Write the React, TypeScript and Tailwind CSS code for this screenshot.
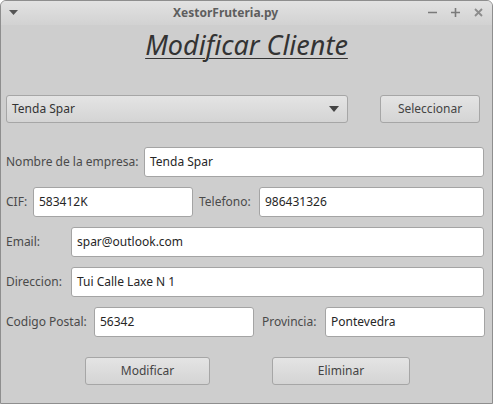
import React from "react";

function Field({ value, className = "" }: { value: string; className?: string }) {
  return (
    <div
      className={`flex h-[30px] items-center rounded-[3px] border border-[#a4a4a4] bg-white pl-[5px] text-[12px] text-[#262626] ${className}`}
    >
      {value}
    </div>
  );
}

function Label({ children, className = "" }: { children: React.ReactNode; className?: string }) {
  return <span className={`shrink-0 text-[12px] text-[#4a4a4a] ${className}`}>{children}</span>;
}

function Button({ children, className = "" }: { children: React.ReactNode; className?: string }) {
  return (
    <div
      className={`flex h-[28px] items-center justify-center rounded-[3px] border border-[#a6a6a6] bg-gradient-to-b from-[#e4e4e4] to-[#d4d4d4] text-[12px] text-[#444] ${className}`}
    >
      {children}
    </div>
  );
}

export default function App() {
  return (
    <div className="h-[406px] w-[494px] bg-white font-['Noto_Sans',sans-serif]">
      <div className="flex h-[404px] w-[493px] flex-col overflow-hidden rounded-t-[6px] border border-[#8e8e8e] bg-[#cecece]">
        {/* title bar */}
        <div className="relative flex h-[24px] shrink-0 items-center bg-gradient-to-b from-[#e2e2e2] to-[#d2d2d2]">
          <svg className="absolute left-[8px] top-[9px]" width="9" height="6" viewBox="0 0 9 6">
            <path d="M0 0 H9 L4.5 5 Z" fill="#555" />
          </svg>
          <span className="ml-[172px] text-[12px] font-bold text-[#5e5e5e]">XestorFruteria.py</span>
          <div className="absolute right-[9px] top-[7px] flex items-center gap-[14px]">
            <svg width="9" height="9" viewBox="0 0 9 9">
              <path d="M0 4.5 H9" stroke="#7a7a7a" strokeWidth="1.6" />
            </svg>
            <svg width="9" height="9" viewBox="0 0 9 9">
              <path d="M0 4.5 H9 M4.5 0 V9" stroke="#7a7a7a" strokeWidth="1.6" />
            </svg>
            <svg width="9" height="9" viewBox="0 0 9 9">
              <path d="M1 1 L8 8 M8 1 L1 8" stroke="#8c8c8c" strokeWidth="1.8" />
            </svg>
          </div>
        </div>

        <div className="flex flex-col px-[5px]">
          <h1 className="mt-[3px] text-center text-[27px] italic leading-[34px] text-[#333] underline decoration-1 underline-offset-[3px]">
            Modificar Cliente
          </h1>

          {/* selector */}
          <div className="mt-[33px] flex items-center">
            <div className="flex h-[28px] w-[342px] items-center justify-between rounded-[3px] border border-[#a6a6a6] bg-gradient-to-b from-[#e4e4e4] to-[#d4d4d4] pl-[5px] pr-[8px] text-[12px] text-[#333]">
              <span>Tenda Spar</span>
              <svg width="10" height="6" viewBox="0 0 10 6">
                <path d="M0 0 H10 L5 6 Z" fill="#444" />
              </svg>
            </div>
            <Button className="ml-[32px] w-[100px]">Seleccionar</Button>
          </div>

          {/* form */}
          <div className="mt-[24px] flex flex-col gap-[10px]">
            <div className="flex items-center">
              <Label className="w-[138px]">Nombre de la empresa:</Label>
              <Field value="Tenda Spar" className="mr-[3px] flex-1" />
            </div>
            <div className="flex items-center">
              <Label className="w-[27px]">CIF:</Label>
              <Field value="583412K" className="w-[160px]" />
              <Label className="ml-[6px] w-[60px]">Telefono:</Label>
              <Field value="986431326" className="mr-[3px] flex-1" />
            </div>
            <div className="flex items-center">
              <Label className="w-[65px]">Email:</Label>
              <Field value="spar@outlook.com" className="mr-[3px] flex-1" />
            </div>
            <div className="flex items-center">
              <Label className="w-[65px]">Direccion:</Label>
              <Field value="Tui Calle Laxe N 1" className="mr-[3px] flex-1" />
            </div>
            <div className="flex items-center">
              <Label className="w-[88px]">Codigo Postal:</Label>
              <Field value="56342" className="w-[160px]" />
              <Label className="ml-[8px] w-[63px]">Provincia:</Label>
              <Field value="Pontevedra" className="mr-[2px] flex-1" />
            </div>
          </div>

          <div className="mt-[20px] flex">
            <Button className="ml-[79px] w-[125px]">Modificar</Button>
            <Button className="ml-[62px] w-[138px]">Eliminar</Button>
          </div>
        </div>
      </div>
    </div>
  );
}
